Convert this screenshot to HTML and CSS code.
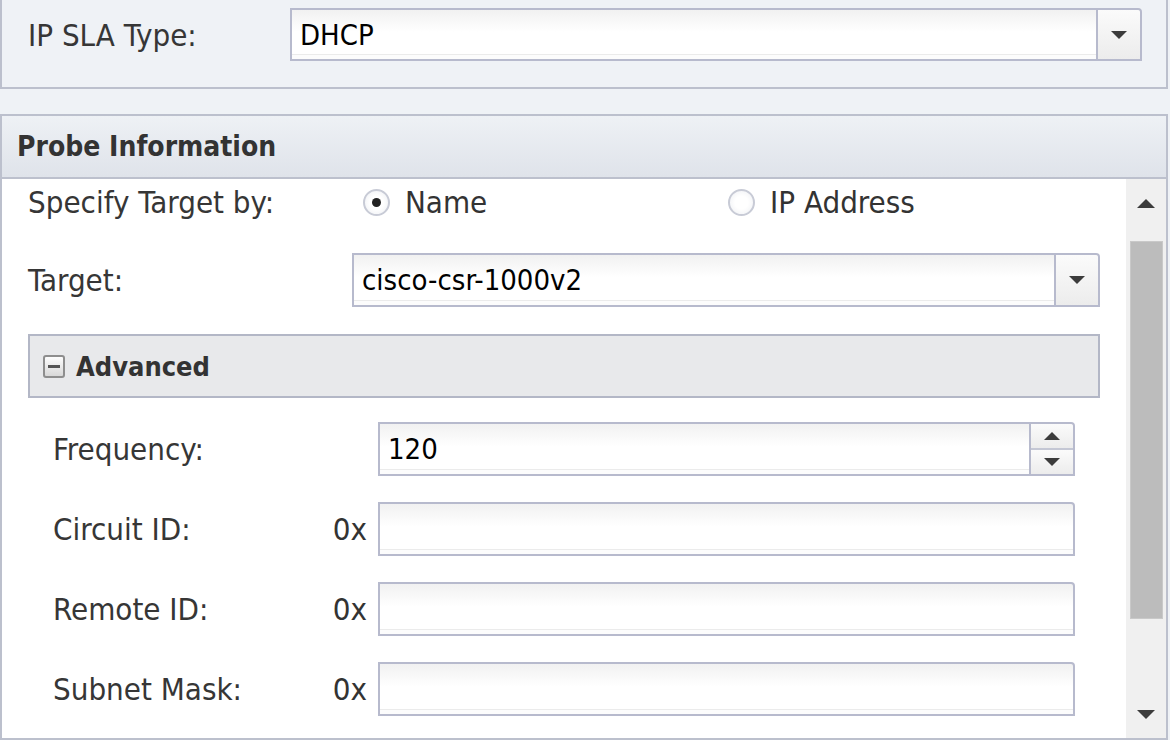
FILE: index.html
```html
<!DOCTYPE html>
<html>
<head>
<meta charset="utf-8">
<link rel="stylesheet" href="styles.css">
</head>
<body>
<div class="top-panel">
  <div class="top-row">
    <span class="label top-label">IP SLA Type:</span>
    <div class="combo top-combo">
      <span class="combo-value">DHCP</span>
      <span class="combo-btn"><span class="tri-down"></span></span>
    </div>
  </div>
</div>

<div class="probe">
  <div class="probe-header">Probe Information</div>
  <div class="probe-body">
    <div class="probe-content">
      <div class="row row-specify">
        <span class="label col-label">Specify Target by:</span>
        <span class="radio-opt radio-name"><span class="radio checked"></span>Name</span>
        <span class="radio-opt radio-ip"><span class="radio"></span>IP Address</span>
      </div>
      <div class="row row-target">
        <span class="label col-label">Target:</span>
        <div class="combo target-combo">
          <span class="combo-value">cisco-csr-1000v2</span>
          <span class="combo-btn"><span class="tri-down"></span></span>
        </div>
      </div>
      <div class="adv-header">
        <span class="adv-icon"><span class="adv-bar"></span></span>
        <span class="adv-title">Advanced</span>
      </div>
      <div class="adv-body">
        <div class="field">
          <span class="label field-label">Frequency:</span>
          <span class="prefix"></span>
          <div class="combo spin">
            <span class="combo-value">120</span>
            <span class="spin-btns">
              <span class="spin-up"><span class="tri-up"></span></span>
              <span class="spin-down"><span class="tri-down"></span></span>
            </span>
          </div>
        </div>
        <div class="field">
          <span class="label field-label">Circuit ID:</span>
          <span class="prefix">0x</span>
          <div class="combo text-input"></div>
        </div>
        <div class="field">
          <span class="label field-label">Remote ID:</span>
          <span class="prefix">0x</span>
          <div class="combo text-input"></div>
        </div>
        <div class="field">
          <span class="label field-label">Subnet Mask:</span>
          <span class="prefix">0x</span>
          <div class="combo text-input"></div>
        </div>
      </div>
    </div>
    <div class="scrollbar">
      <span class="sb-arrow sb-up"><span class="tri-up"></span></span>
      <span class="sb-track"><span class="sb-thumb"></span></span>
      <span class="sb-arrow sb-down"><span class="tri-down"></span></span>
    </div>
  </div>
</div>
</body>
</html>
```

FILE: styles.css
```css
html, body {
  margin: 0;
  padding: 0;
}
body {
  width: 1170px;
  height: 740px;
  overflow: hidden;
  background: #eff2f6;
  font-family: "DejaVu Sans Condensed", "DejaVu Sans", sans-serif;
  font-stretch: semi-condensed;
  font-size: 31px;
  color: #333;
}

.top-panel {
  width: 1164px;
  height: 87px;
  border: 2px solid #bcc0cd;
  border-top: none;
  background: #eff2f6;
}
.top-row {
  display: flex;
  align-items: center;
  padding-top: 8px;
  padding-left: 26px;
}
.top-label {
  width: 262px;
}
.top-combo {
  width: 852px;
  height: 53px;
}

.label {
  color: #363636;
  white-space: nowrap;
}

.combo {
  box-sizing: border-box;
  display: flex;
  align-items: center;
  border: 2px solid #b7bacd;
  border-top-right-radius: 4px;
  background: linear-gradient(#f1f1f1, #ffffff 45%);
  box-shadow: inset 0 -4px 0 #fcfcfc, inset 0 -5px 0 #ebebeb;
  color: #000;
  font-size: 29px;
}
.combo-value {
  flex: 1;
  padding-left: 8px;
}
.combo-btn {
  align-self: stretch;
  width: 42px;
  border-left: 2px solid #b7bacd;
  background: linear-gradient(#fbfbfb, #ececec);
  border-top-right-radius: 3px;
  display: flex;
  align-items: center;
  justify-content: center;
}
.tri-down {
  width: 0;
  height: 0;
  border-left: 8px solid transparent;
  border-right: 8px solid transparent;
  border-top: 8px solid #3c3c3c;
}
.tri-up {
  width: 0;
  height: 0;
  border-left: 8px solid transparent;
  border-right: 8px solid transparent;
  border-bottom: 8px solid #3c3c3c;
}

.probe {
  margin-top: 25px;
  width: 1164px;
  border: 2px solid #bcc0cd;
  background: #fff;
}
.probe-header {
  box-sizing: border-box;
  height: 63px;
  padding-left: 15px;
  display: flex;
  align-items: center;
  font-weight: bold;
  font-size: 28px;
  color: #333;
  background: linear-gradient(#eef1f5, #dfe3ea);
  border-bottom: 2px solid #bcc0cd;
}
.probe-body {
  display: flex;
  height: 559px;
}
.probe-content {
  flex: 1;
  padding-left: 26px;
  padding-right: 26px;
}

.row {
  display: flex;
  align-items: center;
}
.col-label {
  width: 324px;
}
.row-specify {
  height: 46px;
}
.radio-opt {
  display: flex;
  align-items: center;
  white-space: nowrap;
}
.radio-name {
  width: 365px;
  padding-left: 11px;
}
.radio {
  box-sizing: border-box;
  width: 27px;
  height: 27px;
  border-radius: 50%;
  border: 2px solid #c8cbd6;
  background: radial-gradient(circle, #ffffff 40%, #eceef2 100%);
  margin-right: 15px;
  display: flex;
  align-items: center;
  justify-content: center;
}
.radio.checked::after {
  content: "";
  width: 9px;
  height: 9px;
  border-radius: 50%;
  background: #222;
}
.row-target {
  margin-top: 28px;
}
.target-combo {
  flex: 1;
  height: 54px;
}

.adv-header {
  box-sizing: border-box;
  margin-top: 27px;
  height: 64px;
  display: flex;
  align-items: center;
  padding-left: 13px;
  background: #e8e9eb;
  border: 2px solid #b3b7c6;
}
.adv-icon {
  box-sizing: border-box;
  width: 22px;
  height: 23px;
  border: 2px solid #8e8e8e;
  border-radius: 3px;
  background: linear-gradient(#fdfdfd, #d8d8d8);
  display: flex;
  align-items: center;
  justify-content: center;
  margin-right: 11px;
}
.adv-bar {
  width: 12px;
  height: 3px;
  background: #555;
}
.adv-title {
  font-weight: bold;
  font-size: 27px;
  color: #333;
}

.adv-body {
  padding-left: 25px;
  padding-right: 25px;
  padding-top: 24px;
}
.field {
  display: flex;
  align-items: center;
  height: 54px;
  margin-bottom: 26px;
}
.field-label {
  width: 270px;
}
.prefix {
  box-sizing: border-box;
  width: 55px;
  padding-right: 11px;
  text-align: right;
  color: #333;
}
.field .combo {
  flex: 1;
  height: 54px;
}
.spin-btns {
  align-self: stretch;
  width: 42px;
  border-left: 2px solid #b7bacd;
  display: flex;
  flex-direction: column;
}
.spin-up, .spin-down {
  flex: 1;
  display: flex;
  align-items: center;
  justify-content: center;
  background: linear-gradient(#fbfbfb, #ececec);
}
.spin-up {
  border-bottom: 2px solid #c4c7d4;
  border-top-right-radius: 3px;
}

.scrollbar {
  width: 40px;
  background: #f0f0f0;
  display: flex;
  flex-direction: column;
  align-items: center;
}
.scrollbar .tri-up,
.scrollbar .tri-down {
  border-left-width: 9px;
  border-right-width: 9px;
}
.scrollbar .tri-up { border-bottom-width: 9px; }
.scrollbar .tri-down { border-top-width: 9px; }
.sb-arrow {
  display: flex;
  align-items: center;
  justify-content: center;
  flex: none;
}
.sb-up {
  height: 62px;
  padding-bottom: 14px;
  box-sizing: border-box;
}
.sb-down {
  height: 58px;
  padding-top: 10px;
  box-sizing: border-box;
}
.sb-track {
  flex: 1;
  width: 100%;
  display: flex;
  flex-direction: column;
  align-items: center;
}
.sb-thumb {
  width: 33px;
  height: 378px;
  background: #bcbcbc;
  border: 1px solid #c9c9c9;
  box-sizing: border-box;
}
```
